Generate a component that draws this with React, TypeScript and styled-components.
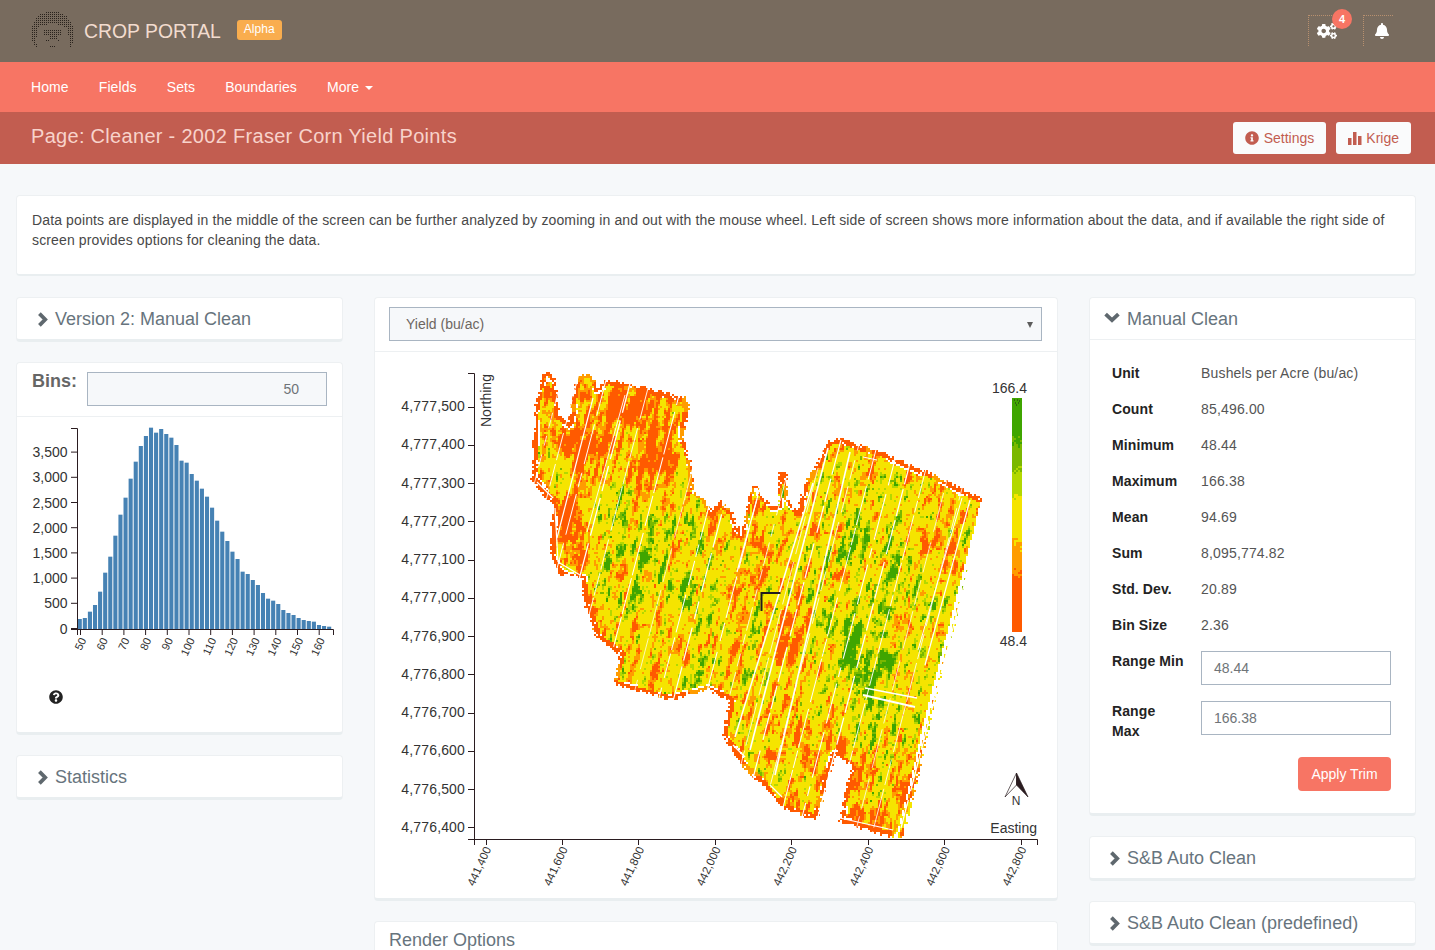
import React from "react";
import styled, { createGlobalStyle } from "styled-components";
import { FaBell, FaCogs, FaInfoCircle, FaQuestionCircle } from "react-icons/fa";

const Global = createGlobalStyle`
  html, body { margin: 0; padding: 0; height: 950px; overflow: hidden; background: #f6f8fa; }
  body { font-family: "Liberation Sans", Arial, sans-serif; font-size: 14px; color: #333; }
  * { box-sizing: border-box; }
`;

const Page = styled.div`height: 950px; overflow: hidden;`;
const TopBar = styled.header`
  height: 62px; background: #786b5e; display: flex; align-items: center; padding: 0 42px 0 30px;
`;
const Brand = styled.div`
  font-size: 19.4px; color: #f2dccf; margin-left: 8px; margin-right: 16px;
`;
const AlphaTag = styled.span`
  background: #f9ad4e; color: #fff; font-size: 12px; height: 20px; line-height: 18px; padding: 0 7px; border-radius: 3px;
  margin-top: -2px;
`;
const TopRight = styled.div`margin-left: auto; display: flex; gap: 25px; margin-top: 2px;`;
const IconFrame = styled.div`
  position: relative; width: 30px; height: 31px; color: #fff; margin-top: -4px; padding: 0 1px 0 8px;
  border-top: 1px dotted #b8906f; border-left: 1px dotted #b8906f;
  display: flex; align-items: center; justify-content: center;
`;
const CountBadge = styled.span`
  position: absolute; top: -7px; right: -14px; width: 20px; height: 20px; border-radius: 50%;
  background: #f77564; color: #fff; font-size: 11px; font-weight: 700; display: flex; align-items: center; justify-content: center;
`;
const Nav = styled.nav`
  height: 50px; background: #f77564; display: flex; align-items: center; gap: 30px; padding-left: 31px; color: #fff;
`;
const NavLink = styled.a`color: #fff; font-size: 14px; letter-spacing: .1px; display: inline-flex; align-items: center;`;
const Caret = styled.i`
  display: inline-block; margin-left: 6px; margin-top: 2px; border-top: 4px solid #fff; border-left: 4px solid transparent; border-right: 4px solid transparent;
`;
const SubBar = styled.div`
  height: 52px; background: #c25d50; display: flex; align-items: center; padding: 0 24px 0 31px;
`;
const PageTitle = styled.h1`font-size: 20px; font-weight: 400; letter-spacing: .3px; margin: 0 0 4px; color: #f8d3cb;`;
const SubActions = styled.div`margin-left: auto; display: flex; gap: 10px;`;
const LightButton = styled.button`
  height: 32px; background: #fafbfc; border: 0; border-radius: 3px; color: #c25d50; font: 14px "Liberation Sans", Arial, sans-serif;
  padding: 0 12px; display: flex; align-items: center; gap: 4px;
`;
const Main = styled.main`padding: 31px 19px 0 16px;`;
const Card = styled.section`
  background: #fff; border: 1px solid #edf0f2; border-bottom: 3px solid #e9eef0; border-radius: 4px;
`;
const Intro = styled(Card)`
  height: 81px; padding: 14px 15px; line-height: 20px; color: #484848; letter-spacing: .13px; border-bottom-width: 2px;
`;
const Columns = styled.div`
  display: grid; grid-template-columns: 327px 684px 327px; column-gap: 31px; margin-top: 21px;
`;
const Stack = styled.div`display: flex; flex-direction: column; gap: 20px;`;
const Heading = styled.div<{ $pad: number; $line?: boolean }>`
  height: ${p => (p.$line ? 42 : 41)}px; display: flex; align-items: center; gap: 7px; padding-left: ${p => p.$pad}px;
  padding-top: 1px; font-size: 18px; color: #67747d;
  ${p => p.$line && "border-bottom: 1px solid #edf0f2;"}
  svg { color: #5f686e; flex: none; }
`;
const BinsRow = styled.div`
  height: 54px; display: flex; padding: 9px 15px 0 15px; gap: 10px; border-bottom: 1px solid #edf0f2; align-items: flex-start;
`;
const BinsLabel = styled.b`font-size: 18px; color: #666; line-height: 18px;`;
const FieldBox = styled.div<{ $align?: string; $bg?: string }>`
  height: 34px; border: 1px solid #a9b5c2; background: ${p => p.$bg ?? "#fff"}; color: #6f7478; font-size: 14px;
  display: flex; align-items: center; justify-content: ${p => p.$align ?? "flex-start"}; padding: 0 12px;
`;
const BinsInput = styled(FieldBox)`flex: 1; padding-right: 27px;`;
const RangeInput = styled(FieldBox)`margin-top: 8px;`;
const Drawing = styled.svg`
  display: block; font-family: "Liberation Sans", Arial, sans-serif;
  text { fill: #333; }
`;
const HelpRow = styled.div`padding: 23px 0 0 32px; height: 65px; color: #222; line-height: 0;`;
const SelectRow = styled.div`padding: 9px 15px 10px 14px; border-bottom: 1px solid #edf0f2;`;
const SelectBox = styled(FieldBox)`padding-left: 16px; color: #6d6661; position: relative;`;
const SelectArrow = styled.i`
  position: absolute; right: 8px; top: 14px; border-top: 6px solid #5c5c5c; border-left: 3px solid transparent; border-right: 3px solid transparent;
`;
const StatsBody = styled.div`padding: 15px 24px 22px 22px;`;
const StatRow = styled.div<{ $h?: number }>`
  display: grid; grid-template-columns: 89px 1fr; min-height: ${p => p.$h ?? 36}px; align-items: start;
`;
const StatLabel = styled.b`font-size: 14px; line-height: 20px; color: #232323; padding-top: 8px; letter-spacing: .1px;`;
const StatValue = styled.span`font-size: 14px; line-height: 20px; color: #555; padding-top: 8px; letter-spacing: .17px;`;
const ButtonRow = styled.div`display: flex; justify-content: flex-end; margin-top: 14px;`;
const ApplyButton = styled.button`
  height: 34px; width: 93px; border: 0; border-radius: 4px; background: #f77564; color: #fff; font: 14px "Liberation Sans", Arial, sans-serif;
`;
const RenderHead = styled(Heading)`height: 60px; align-items: flex-start; padding-top: 8px;`;
const ChevronDownMark = styled.svg`margin-top: -4px;`;

const ChevronRight = () => (
  <svg width="11" height="15" viewBox="0 0 11 15"><path d="M2.4 1.6L8.2 7.5L2.4 13.4" fill="none" stroke="currentColor" strokeWidth="3.8" /></svg>
);
const ChevronDown = () => (
  <ChevronDownMark width="16" height="11" viewBox="0 0 16 11"><path d="M1.6 2.2L8 8.2L14.4 2.2" fill="none" stroke="currentColor" strokeWidth="3.8" /></ChevronDownMark>
);

/* ---- yield map generation (page coordinates) ---- */
type P = [number, number];
const FIELD: P[] = [
  [547,372],[552,378],[556,400],[557,415],[563,418],[568,422],[577,378],[583,374],[590,375],[596,388],[607,380],[640,387],[685,398],[687,405],[680,440],[683,441],[688,460],[692,492],[702,498],[710,512],[720,502],[730,512],[740,535],[753,483],[763,500],[772,508],[780,505],[779,473],[785,472],[785,497],[797,513],[805,483],[818,462],[828,442],[843,438],[853,443],[887,455],[933,475],[978,498],[978,507],[970,543],[953,620],[933,697],[917,770],[900,838],[840,820],[852,763],[833,753],[815,818],[780,805],[767,787],[740,763],[733,750],[723,733],[730,700],[707,687],[670,698],[615,682],[620,653],[597,637],[585,603],[582,577],[560,572],[550,555],[553,505],[532,478],[535,408],[543,375],
];
const BLOBS: [number, number, number, number][] = [
  [575,522,16,-.2],[612,408,16,-.2],[647,465,18,-.2],[590,452,14,-.18],[556,440,14,-.16],[640,398,20,-.12],[548,395,14,-.14],[665,425,16,-.1],
  [600,510,16,.06],[625,490,16,.07],[680,560,24,.06],[870,680,22,.14],[900,590,20,.09],[850,640,22,.1],[860,530,20,.08],[885,505,14,.07],
  [875,725,18,.08],[790,640,40,-.03],[800,740,34,-.07],[870,800,30,-.1],[950,560,16,-.1],[760,530,24,-.05],[650,620,50,.03],
];
const hash = (i: number, j: number) => { const s = Math.sin(i * 127.1 + j * 311.7) * 43758.5453; return s - Math.floor(s); };
const noise = (x: number, y: number) => {
  const i = Math.floor(x), j = Math.floor(y), fx = x - i, fy = y - j;
  const a = fx * fx * (3 - 2 * fx), b = fy * fy * (3 - 2 * fy);
  return (hash(i, j) * (1 - a) + hash(i + 1, j) * a) * (1 - b) + (hash(i, j + 1) * (1 - a) + hash(i + 1, j + 1) * a) * b;
};
const RED = "#ff5a00", ORG = "#ff9c00", YEL = "#f5e400", YGR = "#b3d800", MID = "#7ab800", GRN = "#3fa500";
const inside = (x: number, y: number) => {
  let c = false;
  for (let i = 0, j = FIELD.length - 1; i < FIELD.length; j = i++) {
    const [xi, yi] = FIELD[i], [xj, yj] = FIELD[j];
    if (yi > y !== yj > y && x < ((xj - xi) * (y - yi)) / (yj - yi) + xi) c = !c;
  }
  return c;
};
const edgeDist = (x: number, y: number) => {
  let m = 1e9;
  for (let i = 0, j = FIELD.length - 1; i < FIELD.length; j = i++) {
    const [ax, ay] = FIELD[j], [bx, by] = FIELD[i];
    const dx = bx - ax, dy = by - ay;
    const t = Math.max(0, Math.min(1, ((x - ax) * dx + (y - ay) * dy) / (dx * dx + dy * dy)));
    const d = Math.hypot(x - ax - t * dx, y - ay - t * dy);
    if (d < m) m = d;
  }
  return m;
};
const cellColor = (x: number, y: number): string | null => {
  const ins = inside(x, y);
  const d = edgeDist(x, y);
  if (!ins && (d > 2 || hash(x, y) < .5)) return null;
  const u = x + .26 * y, v = y - .26 * x;
  const rightSide = x > 890 && y > 500;
  if (rightSide && d < 5 && noise(u / 3, 4) > .62) return null;
  const band = rightSide ? 0 : 1 + 3.4 * noise(x / 26, y / 26) + hash(x + 3, y * 2) * .8;
  if (d < band) {
    if (hash(x, y + 1) < .05) return null;
    return noise(x / 14, y / 14) > .72 ? ORG : RED;
  }
  if (!rightSide && d < band + 1.6 && noise(x / 18, y / 18) > .56) return null;
  let val = .12 + .3 * noise(u / 3.4, v / 24) + .17 * noise(x / 14, y / 14) + .17 * noise(x / 4, y / 4) + .16 * noise(u / 2, v / 9);
  for (const [bx, by, s, a] of BLOBS) val += a * Math.exp(-((x - bx) ** 2 + (y - by) ** 2) / (2 * s * s));
  val += (hash(x, y) - .5) * .07;
  if (val < .4) return RED;
  if (val < .46) return ORG;
  if (val < .635) return YEL;
  if (val < .665) return YGR;
  if (val < .7) return MID;
  return GRN;
};
const buildMap = () => {
  const paths: Record<string, string[]> = {};
  const push = (c: string, x: number, y: number, w: number) => { (paths[c] ||= []).push(`M${x} ${y}h${w}v2h-${w}z`); };
  for (let y = 370; y < 840; y += 2) {
    let run: string | null = null, start = 0;
    for (let x = 528; x <= 984; x += 2) {
      const c = x < 984 ? cellColor(x, y) : null;
      if (c !== run) {
        if (run) push(run, start, y, x - start);
        run = c; start = x;
      }
    }
  }
  /* colour legend with dithered bands */
  for (let y = 398; y < 631; y += 2) {
    for (let x = 1012; x < 1022; x += 2) {
      let c = RED;
      if (y < 435) c = GRN;
      else if (y < 448) c = hash(x, y) < (y - 435) / 13 ? MID : GRN;
      else if (y < 463) c = MID;
      else if (y < 473) c = hash(x, y) < (y - 463) / 10 ? YGR : MID;
      else if (y < 485) c = YGR;
      else if (y < 500) c = hash(x, y) < (y - 485) / 15 ? YEL : YGR;
      else if (y < 533) c = YEL;
      else if (y < 552) c = hash(x, y) < (y - 533) / 19 ? ORG : YEL;
      else if (y < 567) c = ORG;
      else if (y < 583) c = hash(x, y) < (y - 567) / 16 ? RED : ORG;
      push(c, x, y, 2);
    }
  }
  return Object.entries(paths).map(([c, list]) => ({ c, d: list.join("") }));
};
const buildStreaks = () => {
  const out: { x1: number; y1: number; x2: number; y2: number; dash: string; w: number }[] = [];
  for (let u = 660, k = 0; u < 1200; k++) {
    const yStart = Math.max(375, (u - 982) / .26);
    const dash = [0, 1, 2, 3, 4, 5].map(n => Math.round((n % 2 ? 2 + 9 * hash(k, n) : 10 + 40 * hash(k, n)))).join(" ");
    out.push({ x1: u - .26 * yStart, y1: yStart, x2: u - .26 * 832, y2: 832, dash, w: .7 + .6 * hash(k, 11) });
    u += 11 + 22 * hash(k, 7);
  }
  return out;
};
const WHITE_LINES: [number, number, number, number, number][] = [
  [850,452,775,775,1.6],[828,448,750,750,1.6],[813,483,735,737,1.5],[970,500,925,665,1.2],[962,498,918,650,1],
  [593,398,557,538,1.2],[625,395,587,532,.9],[758,495,737,572,1.2],
  [865,688,917,698,1.6],[863,695,915,707,1.8],[840,818,893,830,1.2],[863,457,877,460,1],[537,482,553,498,1.2],[555,508,558,562,1.2],[558,562,580,575,1.2],
  [733,745,745,757,1.4],[770,785,782,797,1.2],
];

const HIST_TOPS = [777,774,755,735,695,638,590,527,464,413,356,305,258,228,203,218,207,222,233,255,302,308,342,362,386,410,443,482,515,543,575,597,635,642,660,675,699,716,722,732,750,759,765,774,780,783,785,795,798,800];
const AXIS = "#2a1c20";

const Histogram = () => (
  <Drawing width={325} height={250} viewBox="17 417 325 250">
    {HIST_TOPS.map((t, i) => {
      const top = 360 + t / 3;
      return <rect key={i} x={77.7 + i * 5.09} y={top} width={4.1} height={629 - top} fill="#4682b4" />;
    })}
    <path d="M71 428.5H77.5V629.5M71 629.5H333.5V635M77.5 629.5V635" stroke={AXIS} fill="none" />
    {[0, 500, 1000, 1500, 2000, 2500, 3000, 3500].map((v, i) => {
      const y = 628.5 - i * 25.2;
      return (
        <g key={v}>
          <path d={`M71 ${y}H77`} stroke={AXIS} />
          <text x={67.5} y={y + 5} textAnchor="end" fontSize={14}>{v.toLocaleString("en-US")}</text>
        </g>
      );
    })}
    {Array.from({ length: 12 }, (_, i) => {
      const x = 80.5 + i * 21.7;
      return (
        <g key={i}>
          <path d={`M${x} 629V635`} stroke={AXIS} />
          <text transform={`translate(${x + 6} 640) rotate(-65)`} textAnchor="end" fontSize={11}>{50 + i * 10}</text>
        </g>
      );
    })}
  </Drawing>
);

const YIELD_LABELS = ["4,777,500","4,777,400","4,777,300","4,777,200","4,777,100","4,777,000","4,776,900","4,776,800","4,776,700","4,776,600","4,776,500","4,776,400"];
const EAST_LABELS = ["441,400","441,600","441,800","442,000","442,200","442,400","442,600","442,800"];

const YieldMap = () => {
  const cells = React.useMemo(buildMap, []);
  const streaks = React.useMemo(buildStreaks, []);
  return (
    <Drawing width={682} height={546} viewBox="375 352 682 546">
      {cells.map(({ c, d }) => <path key={c} d={d} fill={c} shapeRendering="crispEdges" />)}
      {streaks.map((s, i) => <line key={i} x1={s.x1} y1={s.y1} x2={s.x2} y2={s.y2} stroke="#fff" strokeWidth={s.w} strokeDasharray={s.dash} />)}
      {WHITE_LINES.map(([a, b, c, d, w], i) => <line key={i} x1={a} y1={b} x2={c} y2={d} stroke="#fff" strokeWidth={w} />)}
      <path d="M780.5 593H761.5V611" stroke="#221a1e" strokeWidth={2} fill="none" />
      <path d="M1014 400h1M1017 400h1M1019 401h1M1015 403h1M1018 403h1M1016 405h1" stroke="#222" fill="none" />
      <path d="M468 373.5H474.5V839.5M468 839.5H1037.5V845M474.5 839.5V845" stroke={AXIS} fill="none" />
      {YIELD_LABELS.map((t, i) => {
        const y = 406.5 + i * 38.25;
        return (
          <g key={t}>
            <path d={`M468 ${Math.round(y) + .5}H474`} stroke={AXIS} />
            <text x={465} y={y + 4.5} textAnchor="end" fontSize={14} letterSpacing=".15">{t}</text>
          </g>
        );
      })}
      {EAST_LABELS.map((t, i) => {
        const x = 485.5 + i * 76.45;
        return (
          <g key={t}>
            <path d={`M${Math.round(x) + .5} 840V845`} stroke={AXIS} />
            <text transform={`translate(${x + 6} 849) rotate(-65)`} textAnchor="end" fontSize={11.5}>{t}</text>
          </g>
        );
      })}
      <text transform="translate(491 427) rotate(-90)" fontSize={14}>Northing</text>
      <text x={1027} y={393} textAnchor="end" fontSize={14}>166.4</text>
      <text x={1027} y={646} textAnchor="end" fontSize={14}>48.4</text>
      <text x={1037} y={833} textAnchor="end" fontSize={14}>Easting</text>
      <path d="M1016.5 773L1005 797L1016.5 785Z" fill="#fff" stroke="#2a1c20" strokeWidth={.7} />
      <path d="M1016.5 773L1028 797L1016.5 785Z" fill="#2a1c20" stroke="#2a1c20" strokeWidth={.7} />
      <text x={1016} y={805} textAnchor="middle" fontSize={12}>N</text>
    </Drawing>
  );
};

const Logo = () => (
  <svg width="46" height="40" viewBox="0 0 46 40" shapeRendering="crispEdges" style={{ display: "block", marginTop: -3 }}>
    <defs>
      <pattern id="dots" width="2" height="2" patternUnits="userSpaceOnUse">
        <rect x="0" y="0" width="1" height="1" fill="#2a231d" />
      </pattern>
    </defs>
    <path fill="url(#dots)" d="M3 33C-1 20 2 2 22 1C42 2 46 20 43 33L39 39C39 30 39 22 36 17C27 13 17 13 9 17C6 22 6 30 7 39Z" />
    <path fill="url(#dots)" d="M14 20H32V25H27V29H30V32H27V29H19V32H16V29H19V25H14ZM20 36H26V38H20Z" />
  </svg>
);
const BarsIcon = () => (
  <svg width="14" height="13" viewBox="0 0 14 13"><path fill="currentColor" d="M0 6h3.5v7H0zM5 0h3.5v13H5zM10 4h3.5v9H10z" /></svg>
);

const STATS: [string, string][] = [
  ["Unit", "Bushels per Acre (bu/ac)"], ["Count", "85,496.00"], ["Minimum", "48.44"], ["Maximum", "166.38"],
  ["Mean", "94.69"], ["Sum", "8,095,774.82"], ["Std. Dev.", "20.89"], ["Bin Size", "2.36"],
];

export default function App() {
  return (
    <Page>
      <Global />
      <TopBar>
        <Logo />
        <Brand>CROP PORTAL</Brand>
        <AlphaTag>Alpha</AlphaTag>
        <TopRight>
          <IconFrame><FaCogs size={20} /><CountBadge>4</CountBadge></IconFrame>
          <IconFrame><FaBell size={16} /></IconFrame>
        </TopRight>
      </TopBar>
      <Nav>
        <NavLink>Home</NavLink>
        <NavLink>Fields</NavLink>
        <NavLink>Sets</NavLink>
        <NavLink>Boundaries</NavLink>
        <NavLink>More<Caret /></NavLink>
      </Nav>
      <SubBar>
        <PageTitle>Page: Cleaner - 2002 Fraser Corn Yield Points</PageTitle>
        <SubActions>
          <LightButton><FaInfoCircle size={14} style={{ marginRight: 1 }} />Settings</LightButton>
          <LightButton><BarsIcon />Krige</LightButton>
        </SubActions>
      </SubBar>
      <Main>
        <Intro>
          Data points are displayed in the middle of the screen can be further analyzed by zooming in and out with the mouse wheel. Left side of screen shows more information about the data, and if available the right side of screen provides options for cleaning the data.
        </Intro>
        <Columns>
          <Stack>
            <Card>
              <Heading $pad={20}><ChevronRight />Version 2: Manual Clean</Heading>
            </Card>
            <Card>
              <BinsRow>
                <BinsLabel>Bins:</BinsLabel>
                <BinsInput $align="flex-end" $bg="#f6f8fa">50</BinsInput>
              </BinsRow>
              <Histogram />
              <HelpRow><FaQuestionCircle size={14} /></HelpRow>
            </Card>
            <Card>
              <Heading $pad={20}><ChevronRight />Statistics</Heading>
            </Card>
          </Stack>
          <Stack>
            <Card>
              <SelectRow>
                <SelectBox $bg="#f6f8fa">Yield (bu/ac)<SelectArrow /></SelectBox>
              </SelectRow>
              <YieldMap />
            </Card>
            <Card>
              <RenderHead $pad={14}>Render Options</RenderHead>
            </Card>
          </Stack>
          <Stack>
            <Card>
              <Heading $pad={14} $line><ChevronDown />Manual Clean</Heading>
              <StatsBody>
                {STATS.map(([k, v]) => (
                  <StatRow key={k}><StatLabel>{k}</StatLabel><StatValue>{v}</StatValue></StatRow>
                ))}
                <StatRow $h={50}>
                  <StatLabel>Range Min</StatLabel>
                  <RangeInput>48.44</RangeInput>
                </StatRow>
                <StatRow $h={50}>
                  <StatLabel>Range<br />Max</StatLabel>
                  <RangeInput>166.38</RangeInput>
                </StatRow>
                <ButtonRow><ApplyButton>Apply Trim</ApplyButton></ButtonRow>
              </StatsBody>
            </Card>
            <Card>
              <Heading $pad={19}><ChevronRight />S&amp;B Auto Clean</Heading>
            </Card>
            <Card>
              <Heading $pad={19}><ChevronRight />S&amp;B Auto Clean (predefined)</Heading>
            </Card>
          </Stack>
        </Columns>
      </Main>
    </Page>
  );
}
